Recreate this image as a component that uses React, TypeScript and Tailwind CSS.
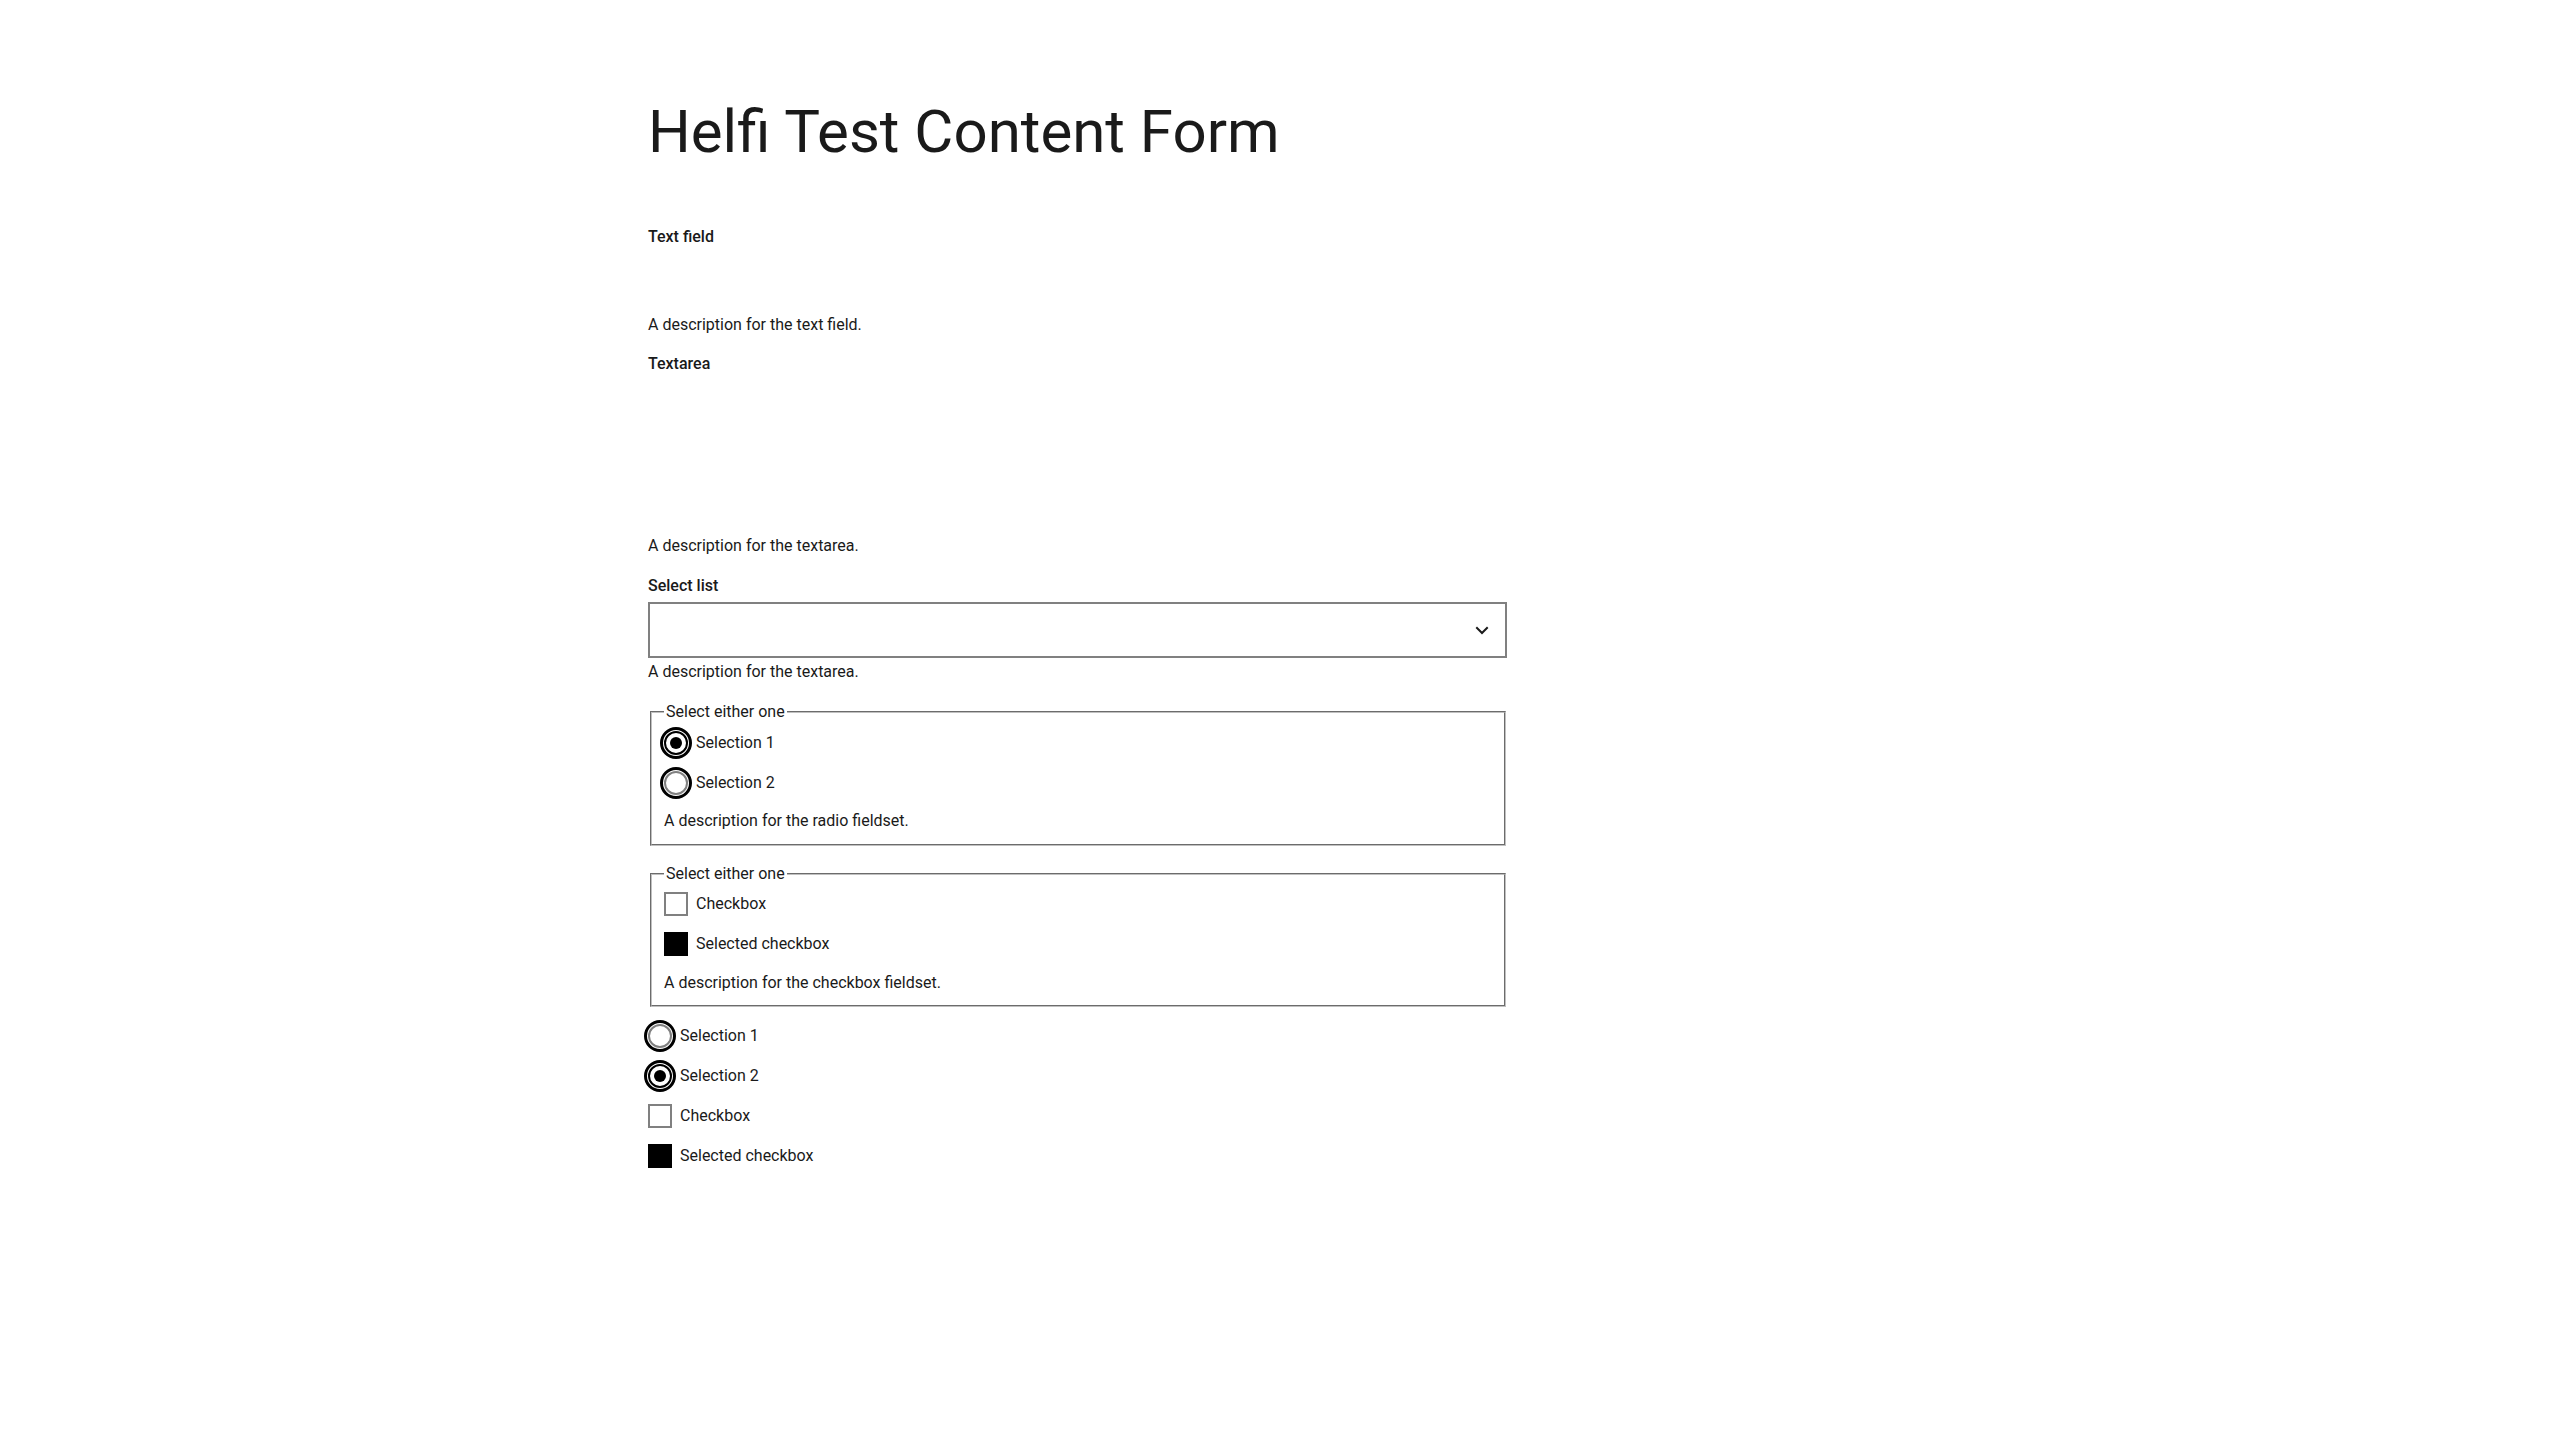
import React from "react";

function Radio({ checked }: { checked: boolean }) {
  return (
    <span
      className={
        checked
          ? "flex h-6 w-6 shrink-0 items-center justify-center rounded-full border-2 border-black bg-white outline-[3px] outline-black outline-offset-1"
          : "flex h-6 w-6 shrink-0 items-center justify-center rounded-full border-2 border-[#808080] bg-white outline-[3px] outline-black outline-offset-1"
      }
    >
      {checked && <span className="h-3 w-3 rounded-full bg-black" />}
    </span>
  );
}

function Checkbox({ checked }: { checked: boolean }) {
  return (
    <span
      className={
        checked
          ? "block h-6 w-6 shrink-0 border-2 border-black bg-black"
          : "block h-6 w-6 shrink-0 border-2 border-[#808080] bg-white"
      }
    />
  );
}

function Row({ children, label }: { children: React.ReactNode; label: string }) {
  return (
    <div className="flex h-10 items-center gap-2">
      {children}
      <span className="text-[16px] leading-5">{label}</span>
    </div>
  );
}

function ChevronDown() {
  return (
    <svg width="24" height="24" viewBox="0 0 24 24" fill="none" stroke="#1a1a1a" strokeWidth="2" strokeLinecap="square">
      <path d="m7 10 5 5 5-5" />
    </svg>
  );
}

export default function App() {
  return (
    <div className="min-h-screen bg-white font-[Roboto,sans-serif] text-[#1a1a1a]">
      <div className="ml-[648px] w-[859px] pt-[97px] pb-24">
        <h1 className="text-[60px] leading-[70px] font-normal">Helfi Test Content Form</h1>

        <div className="mt-[60px] text-[16px] leading-5 font-medium">Text field</div>
        <div className="h-[68px]" />
        <div className="text-[16px] leading-5">A description for the text field.</div>

        <div className="mt-[19px] text-[16px] leading-5 font-medium">Textarea</div>
        <div className="h-[162px]" />
        <div className="text-[16px] leading-5">A description for the textarea.</div>

        <div className="mt-5 text-[16px] leading-5 font-medium">Select list</div>
        <div className="mt-[6px] flex h-14 items-center justify-end border-2 border-[#808080] pr-[11px]">
          <ChevronDown />
        </div>
        <div className="mt-1 text-[16px] leading-5">A description for the textarea.</div>

        <fieldset className="ml-[2px] mr-px mt-5 border-2 border-[#c0c0c0] px-3 pb-[13px] [border-style:groove]">
          <legend className="px-[2px] text-[16px] leading-5">Select either one</legend>
          <div className="mt-px">
            <Row label="Selection 1">
              <Radio checked />
            </Row>
            <Row label="Selection 2">
              <Radio checked={false} />
            </Row>
          </div>
          <div className="mt-2 text-[16px] leading-5">A description for the radio fieldset.</div>
        </fieldset>

        <fieldset className="ml-[2px] mr-px mt-[18px] border-2 border-[#c0c0c0] px-3 pb-3 [border-style:groove]">
          <legend className="px-[2px] text-[16px] leading-5">Select either one</legend>
          <div>
            <Row label="Checkbox">
              <Checkbox checked={false} />
            </Row>
            <Row label="Selected checkbox">
              <Checkbox checked />
            </Row>
          </div>
          <div className="mt-[9px] text-[16px] leading-5">A description for the checkbox fieldset.</div>
        </fieldset>

        <div className="mt-[9px]">
          <Row label="Selection 1">
            <Radio checked={false} />
          </Row>
          <Row label="Selection 2">
            <Radio checked />
          </Row>
          <Row label="Checkbox">
            <Checkbox checked={false} />
          </Row>
          <Row label="Selected checkbox">
            <Checkbox checked />
          </Row>
        </div>
      </div>
    </div>
  );
}
